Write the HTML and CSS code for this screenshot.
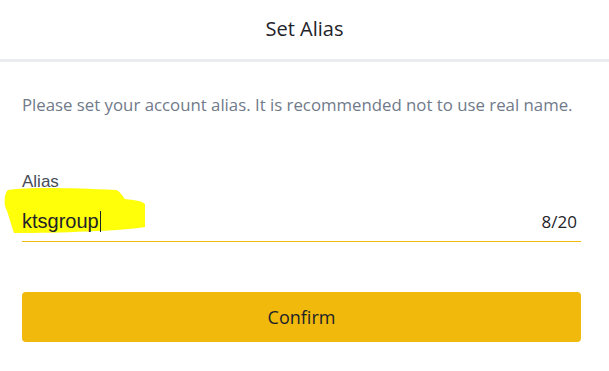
FILE: index.html
```html
<!DOCTYPE html>
<html lang="en">
<head>
    <meta charset="UTF-8">
    <meta name="viewport" content="width=device-width, initial-scale=1.0">
    <title>Set Alias</title>
    <link rel="stylesheet" href="styles.css">
</head>
<body>
    <div class="page">
        <div class="header">
            <div class="header-title">Set Alias</div>
        </div>

        <div class="content">
            <p class="desc">Please set your account alias. It is recommended not to use real name.</p>

            <div class="field">
                <!-- 用户涂的黄色高亮 -->
                <svg class="highlight" width="150" height="50" viewBox="0 0 150 50" xmlns="http://www.w3.org/2000/svg">
                    <path d="M8 3 C30 0 70 1 116 3 C121 5 122 9 125 12 C134 13 142 14 145 17 L145 40 C120 44 60 46 14 46 C11 38 9 28 5 19 C4 12 5 6 8 3 Z" fill="#ffff0a"/>
                </svg>
                <label class="field-label">Alias</label>
                <div class="field-row">
                    <div class="field-value">ktsgroup<span class="caret"></span></div>
                    <div class="field-count">8/20</div>
                </div>
            </div>

            <button class="confirm-btn">Confirm</button>
        </div>
    </div>
</body>
</html>
```

FILE: styles.css
```css
* {
    margin: 0;
    padding: 0;
    box-sizing: border-box;
}

body {
    background-color: #fff;
    color: #1e2329;
    font-family: 'Open Sans', 'Noto Sans', Arial, sans-serif;
}

.page {
    width: 609px;
    height: 371px;
    overflow: hidden;
}

.header {
    height: 62px;
    display: flex;
    align-items: center;
    justify-content: center;
    border-bottom: 3px solid #eaecef;
    padding-bottom: 3px;
}

.header-title {
    font-size: 20px;
    color: #1e2329;
}

.content {
    padding: 0 28px 0 22px;
}

.desc {
    margin-top: 31px;
    font-size: 16.8px;
    line-height: 24px;
    color: #707a8a;
}

.field {
    position: relative;
    margin-top: 55px;
}

.highlight {
    position: absolute;
    left: -22px;
    top: 15px;
}

.field-label {
    position: relative;
    display: block;
    font-family: 'Liberation Sans', Arial, sans-serif;
    font-size: 17px;
    line-height: 20px;
    color: #474d57;
}

.field-row {
    position: relative;
    display: flex;
    align-items: center;
    justify-content: space-between;
    height: 50px;
    padding-top: 10px;
    border-bottom: 1px solid #f0b90b;
}

.field-value {
    display: flex;
    align-items: center;
    font-family: 'Liberation Sans', Arial, sans-serif;
    font-size: 20px;
    color: #1e2329;
}

.caret {
    display: inline-block;
    width: 1px;
    height: 21px;
    margin-left: 1px;
    background-color: #1e2329;
}

.field-count {
    padding-right: 4px;
    font-family: 'Open Sans', Arial, sans-serif;
    font-size: 17px;
    color: #1e2329;
}

.confirm-btn {
    display: block;
    width: 100%;
    height: 50px;
    margin-top: 50px;
    background-color: #f0b90b;
    border: none;
    border-radius: 4px;
    font-family: 'Open Sans', 'Noto Sans', Arial, sans-serif;
    font-size: 18px;
    color: #1e2329;
}
```
